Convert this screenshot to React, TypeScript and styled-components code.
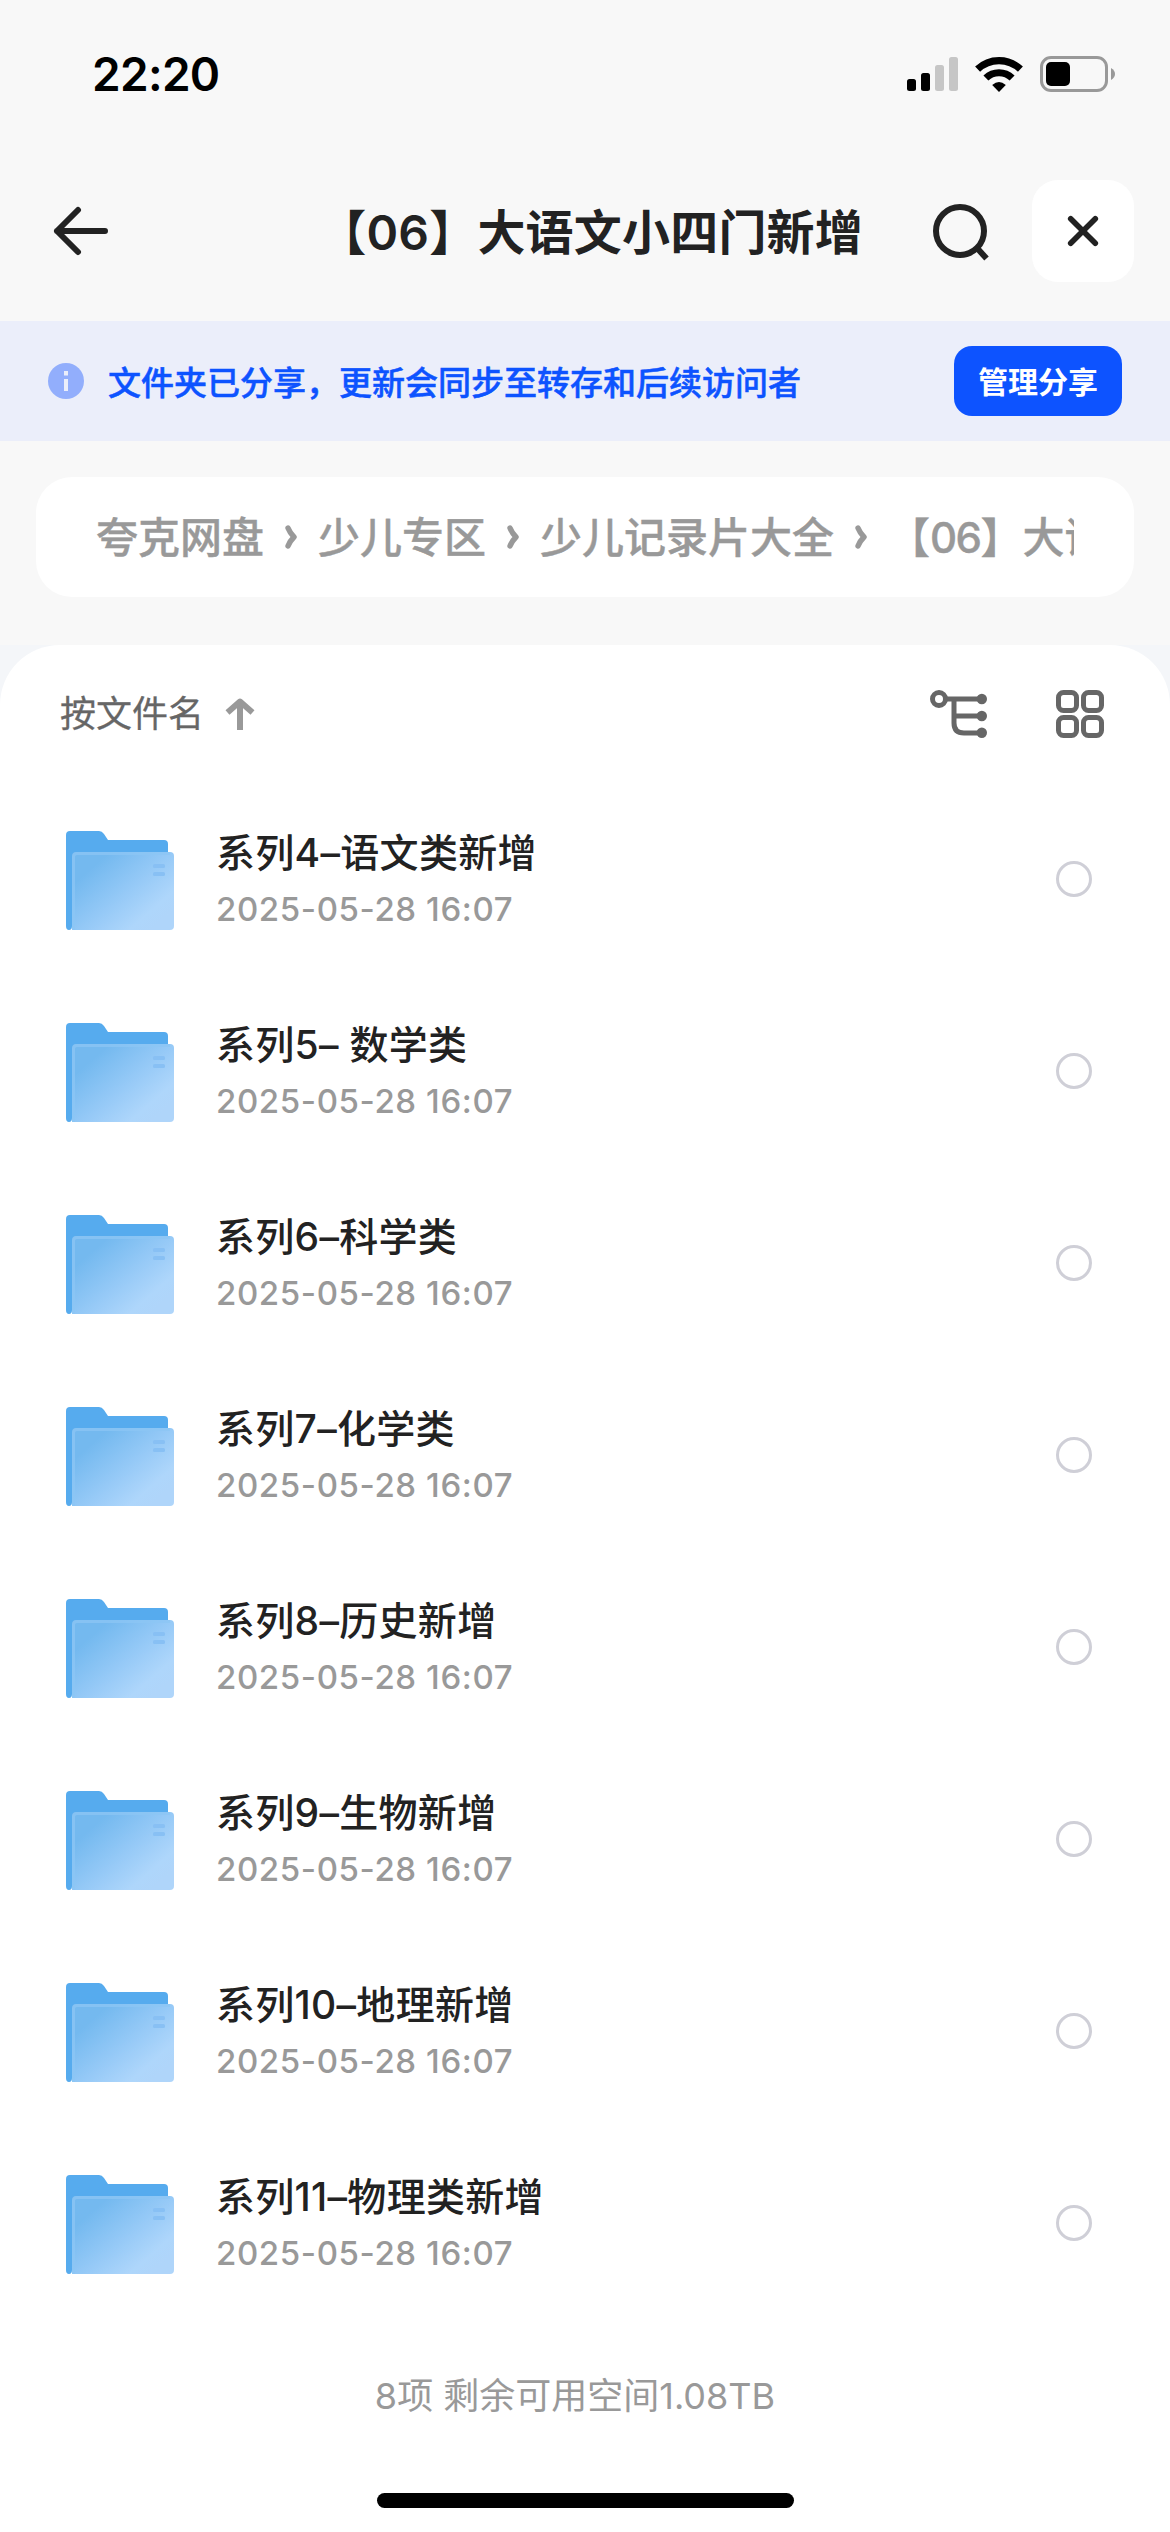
import React from 'react';
import styled, { createGlobalStyle } from 'styled-components';

const GlobalStyle = createGlobalStyle`
  *, *::before, *::after { box-sizing: border-box; }
  body {
    margin: 0;
    background: #f8f8f8;
    font-family: Inter, "Noto Sans CJK SC", sans-serif;
    color: #222;
  }
  button { border: 0; padding: 0; background: none; font: inherit; color: inherit; display: block; }
  svg { display: block; }
`;

const Screen = styled.div`
  width: 1170px;
  height: 2532px;
  display: flex;
  flex-direction: column;
  background: #f8f8f8;
  overflow: hidden;
`;

const StatusBar = styled.header`
  height: 141px;
  padding: 48px 54px 0 92px;
  display: flex;
  justify-content: space-between;
  align-items: flex-start;
`;

const Clock = styled.time`
  font-size: 46px;
  line-height: 52px;
  font-weight: 600;
  letter-spacing: -0.7px;
  color: #000;
`;

const StatusIcons = styled.div`
  display: flex;
  align-items: center;
  gap: 17px;
  height: 52px;
`;

const NavBar = styled.nav`
  height: 180px;
  padding: 0 36px 0 51px;
  display: flex;
  align-items: center;
`;

const IconButton = styled.button`
  flex: none;
`;

const Title = styled.h1`
  flex: 1;
  margin: 0;
  padding: 3px 70px 0 0;
  text-align: right;
  font-size: 48px;
  line-height: 60px;
  font-weight: 600;
  letter-spacing: 0.2px;
  white-space: nowrap;
`;

const CloseButton = styled(IconButton)`
  width: 102px;
  height: 102px;
  margin-left: 42px;
  border-radius: 26px;
  background: #fff;
  display: grid;
  place-items: center;
`;

const ShareBanner = styled.section`
  height: 120px;
  padding: 0 48px;
  display: flex;
  align-items: center;
  background: #ebeefa;
`;

const BannerText = styled.p`
  flex: 1;
  margin: 0;
  padding: 4px 0 0 24px;
  font-size: 33px;
  line-height: 42px;
  font-weight: 500;
  -webkit-text-stroke: 0.5px currentColor;
  color: #0d53ff;
`;

const ManageButton = styled.button`
  width: 168px;
  height: 70px;
  border-radius: 18px;
  background: #0d53ff;
  color: #fff;
  font-size: 30px;
  font-weight: 700;
  line-height: 72px;
  text-align: center;
`;

const Crumbs = styled.div`
  height: 120px;
  margin: 36px 36px 48px;
  padding: 0 60px;
  border-radius: 36px;
  background: #fff;
`;

const CrumbTrack = styled.div`
  height: 100%;
  display: flex;
  align-items: center;
  overflow: hidden;
  white-space: nowrap;
  font-size: 42px;
  line-height: 60px;
  font-weight: 500;
  color: #999;
`;

const Crumb = styled.span`
  flex: none;
  padding-top: 2px;
  -webkit-text-stroke: 0.4px currentColor;
`;

const CrumbNumber = styled.span`
  letter-spacing: -1.6px;
`;

const Separator = styled.svg`
  flex: none;
  margin: 0 21px;
`;

const PanelBackdrop = styled.div`
  flex: 1;
  background: #f4f6f9;
`;

const Panel = styled.main`
  height: 100%;
  display: flex;
  flex-direction: column;
  border-radius: 60px 60px 0 0;
  background: #fff;
`;

const SortBar = styled.div`
  height: 138px;
  padding: 0 66px 0 60px;
  display: flex;
  align-items: center;
`;

const SortLabel = styled.span`
  font-size: 36px;
  line-height: 48px;
  -webkit-text-stroke: 0.3px currentColor;
  color: #666;
  margin-right: 20px;
`;

const ViewActions = styled.div`
  margin-left: auto;
  display: flex;
  gap: 69px;
`;

const FileList = styled.ul`
  margin: 0;
  padding: 0;
  list-style: none;
`;

const FileRow = styled.li`
  height: 192px;
  padding: 0 78px 0 66px;
  display: flex;
  align-items: center;
`;

const FolderArt = styled.svg`
  flex: none;
  margin-top: 3px;
`;

const FileInfo = styled.div`
  flex: 1;
  padding: 4px 0 0 42px;
`;

const FileName = styled.div`
  font-size: 39px;
  line-height: 56px;
  font-weight: 500;
  letter-spacing: 0.3px;
  white-space: pre;
`;

const FileDate = styled.div`
  font-size: 33px;
  line-height: 56px;
  font-weight: 500;
  letter-spacing: 0.6px;
  color: #999;
`;

const Radio = styled.span`
  width: 36px;
  height: 36px;
  border: 3.5px solid #cfcfd7;
  border-radius: 50%;
`;

const Summary = styled.footer`
  margin-top: 53px;
  padding-right: 20px;
  text-align: center;
  font-size: 36px;
  line-height: 48px;
  color: #999;
`;

const HomeIndicator = styled.div`
  width: 417px;
  height: 15px;
  margin: auto auto 24px 377px;
  border-radius: 8px;
  background: #000;
`;

const SignalIcon = () => (
  <svg width="51" height="36" viewBox="0 0 51 36">
    <rect x="0" y="23" width="9" height="12" rx="2.5" fill="#000" />
    <rect x="14" y="17" width="9" height="18" rx="2.5" fill="#000" />
    <rect x="28" y="9" width="9" height="26" rx="2.5" fill="#c6c6c6" />
    <rect x="42" y="1" width="9" height="34" rx="2.5" fill="#c6c6c6" />
  </svg>
);

const WifiIcon = () => (
  <svg width="48" height="36" viewBox="0 0 48 36">
    <g fill="none" stroke="#000" strokeWidth="7.2">
      <path d="M2.6 13.2A31 31 0 0 1 45.4 13.2" />
      <path d="M10.9 22A19 19 0 0 1 37.1 22" />
    </g>
    <path d="M17.2 28.9Q24 23 30.8 28.9L24 36Z" fill="#000" />
  </svg>
);

const BatteryIcon = () => (
  <svg width="76" height="36" viewBox="0 0 76 36">
    <rect x="1.5" y="1.5" width="65" height="33" rx="9.5" fill="none" stroke="#999" strokeWidth="3" />
    <rect x="6" y="6" width="24" height="24" rx="5" fill="#000" />
    <path d="M71 12Q75 14.5 75 18T71 24Z" fill="#999" />
  </svg>
);

const BackIcon = () => (
  <svg width="60" height="54" viewBox="0 0 60 54" fill="none" stroke="#222" strokeWidth="6" strokeLinecap="round" strokeLinejoin="round">
    <path d="M27 6L6 27L27 48M6 27H54" />
  </svg>
);

const SearchIcon = () => (
  <svg width="57" height="60" viewBox="0 0 57 60" fill="none" stroke="#222" strokeWidth="6">
    <circle cx="27" cy="30" r="24" />
    <path d="M44 47L53.5 57.5" />
  </svg>
);

const CloseIcon = () => (
  <svg width="32" height="32" viewBox="0 0 32 32" fill="none" stroke="#222" strokeWidth="5.6" strokeLinecap="round">
    <path d="M3.7 3.7L28.3 28.3M28.3 3.7L3.7 28.3" />
  </svg>
);

const InfoIcon = () => (
  <svg width="36" height="36" viewBox="0 0 36 36">
    <circle cx="18" cy="18" r="18" fill="#92aefc" />
    <path d="M16 8h4v4.500h-4zM16 16h4v12h-4z" fill="#ebeefa" />
  </svg>
);

const Chevron = () => (
  <Separator width="12" height="24" viewBox="0 0 12 24" fill="none" stroke="#999" strokeWidth="5.4" strokeLinecap="round" strokeLinejoin="round">
    <path d="M3 3Q5 8 9 12Q5 16 3 21" />
  </Separator>
);

const ArrowUpIcon = () => (
  <svg width="32" height="34" viewBox="0 0 32 34" fill="none" stroke="#999" strokeWidth="6">
    <path d="M16 4V33" />
    <path d="M3.5 15.5L16 4.5L28.5 15.5" strokeLinejoin="round" />
  </svg>
);

const TreeIcon = () => (
  <svg width="57" height="48" viewBox="0 0 57 48" fill="none" stroke="#666" strokeWidth="5">
    <circle cx="9" cy="9" r="6.5" />
    <path d="M16 9H52M24 9V33Q24 43 34 43H52M24 26H52" />
    <g fill="#666" stroke="none">
      <circle cx="51.8" cy="9" r="5.2" />
      <circle cx="51.8" cy="26" r="5.2" />
      <circle cx="51.8" cy="42.8" r="5.2" />
    </g>
  </svg>
);

const GridIcon = () => (
  <svg width="48" height="48" viewBox="0 0 48 48" fill="none" stroke="#666" strokeWidth="5">
    <rect x="2.5" y="2.5" width="18" height="18" rx="5" />
    <rect x="27.5" y="2.5" width="18" height="18" rx="5" />
    <rect x="2.5" y="27.5" width="18" height="18" rx="5" />
    <rect x="27.5" y="27.5" width="18" height="18" rx="5" />
  </svg>
);

const FolderIcon = () => (
  <FolderArt width="108" height="99" viewBox="0 0 108 99">
    <defs>
      <linearGradient id="folderFront" x1="0.1" y1="0.15" x2="0.9" y2="0.85">
        <stop offset="0.1" stopColor="#74b9ef" />
        <stop offset="0.55" stopColor="#97caf7" />
        <stop offset="0.85" stopColor="#aed6fb" />
        <stop offset="1" stopColor="#afd5fa" />
      </linearGradient>
    </defs>
    <path d="M0 4Q0 0 4 0H33Q36 0 38 3L42 9H98Q102 9 102 13V60H6V95Q6 99 3 99Q0 99 0 95Z" fill="#56abee" />
    <path d="M6 25Q6 21 10 21H104Q108 21 108 25V95Q108 99 104 99H6Z" fill="url(#folderFront)" />
    <path d="M7.5 99V26Q7.5 22.5 11 22.5H104" fill="none" stroke="#8cc5f4" strokeWidth="3" opacity="0.75" />
    <rect x="87" y="33" width="12" height="4" rx="1.5" fill="#88c0f4" />
    <rect x="87" y="41" width="12" height="4" rx="1.5" fill="#88c0f4" />
  </FolderArt>
);

const crumbs = ['夸克网盘', '少儿专区', '少儿记录片大全', '【06】大语文小四门新增'];

const files = [
  '系列4–语文类新增',
  '系列5– 数学类',
  '系列6–科学类',
  '系列7–化学类',
  '系列8–历史新增',
  '系列9–生物新增',
  '系列10–地理新增',
  '系列11–物理类新增',
];

const CrumbLabel = ({ text }: { text: string }) => (
  <Crumb>
    {text.split(/(\d+)/).map((part, index) =>
      index % 2 ? <CrumbNumber key={index}>{part}</CrumbNumber> : part,
    )}
  </Crumb>
);

export default function App() {
  return (
    <>
      <GlobalStyle />
      <Screen>
        <StatusBar>
          <Clock>22:20</Clock>
          <StatusIcons>
            <SignalIcon />
            <WifiIcon />
            <BatteryIcon />
          </StatusIcons>
        </StatusBar>
        <NavBar>
          <IconButton aria-label="返回"><BackIcon /></IconButton>
          <Title>【06】大语文小四门新增</Title>
          <IconButton aria-label="搜索"><SearchIcon /></IconButton>
          <CloseButton aria-label="关闭"><CloseIcon /></CloseButton>
        </NavBar>
        <ShareBanner>
          <InfoIcon />
          <BannerText>文件夹已分享，更新会同步至转存和后续访问者</BannerText>
          <ManageButton>管理分享</ManageButton>
        </ShareBanner>
        <Crumbs>
          <CrumbTrack>
            {crumbs.map((crumb, index) => (
              <React.Fragment key={crumb}>
                {index > 0 && <Chevron />}
                <CrumbLabel text={crumb} />
              </React.Fragment>
            ))}
          </CrumbTrack>
        </Crumbs>
        <PanelBackdrop>
          <Panel>
            <SortBar>
              <SortLabel>按文件名</SortLabel>
              <ArrowUpIcon />
              <ViewActions>
                <IconButton aria-label="目录树"><TreeIcon /></IconButton>
                <IconButton aria-label="网格"><GridIcon /></IconButton>
              </ViewActions>
            </SortBar>
            <FileList>
              {files.map((name) => (
                <FileRow key={name}>
                  <FolderIcon />
                  <FileInfo>
                    <FileName>{name}</FileName>
                    <FileDate>2025-05-28 16:07</FileDate>
                  </FileInfo>
                  <Radio />
                </FileRow>
              ))}
            </FileList>
            <Summary>8项 剩余可用空间1.08TB</Summary>
            <HomeIndicator />
          </Panel>
        </PanelBackdrop>
      </Screen>
    </>
  );
}
